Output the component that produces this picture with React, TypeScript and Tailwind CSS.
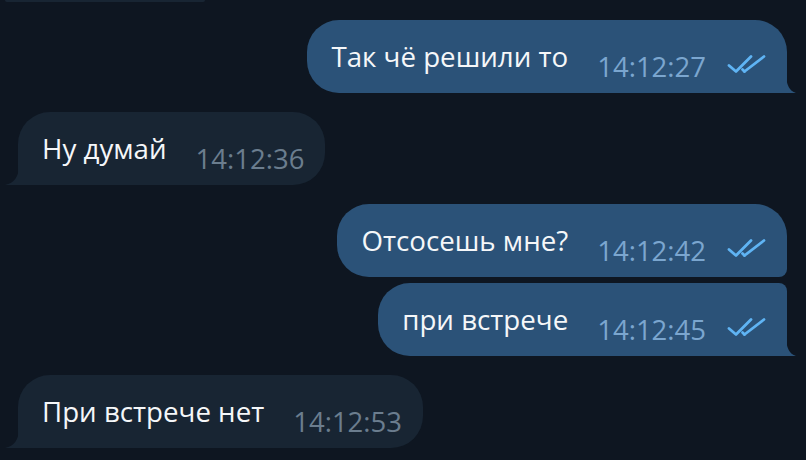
import React from "react";

type Msg = {
  text: string;
  time: string;
  out: boolean;
  tail?: boolean;
  grouped?: "top" | "bottom";
};

const messages: Msg[] = [
  { text: "Так чё решили то", time: "14:12:27", out: true, tail: true },
  { text: "Ну думай", time: "14:12:36", out: false, tail: true },
  { text: "Отсосешь мне?", time: "14:12:42", out: true, grouped: "bottom" },
  { text: "при встрече", time: "14:12:45", out: true, tail: true, grouped: "top" },
  { text: "При встрече нет", time: "14:12:53", out: false, tail: true },
];

const DoubleCheck = () => (
  <svg width="40" height="19" viewBox="0 0 40 19" fill="none" className="mb-[6px] ml-[21px]">
    <path d="M2 10.5 L9 16.5 L24 1.5" stroke="#5fb4f4" strokeWidth="2.8" strokeLinecap="round" strokeLinejoin="round" />
    <path d="M17.5 16.5 L37 1.5" stroke="#5fb4f4" strokeWidth="2.8" strokeLinecap="round" strokeLinejoin="round" />
    <path d="M15.5 14.5 L17.5 16.5" stroke="#5fb4f4" strokeWidth="2.8" strokeLinecap="round" />
  </svg>
);

const Bubble = ({ m }: { m: Msg }) => {
  const bg = m.out ? "bg-[#2b5278]" : "bg-[#182533]";
  const fill = m.out ? "#2b5278" : "#182533";
  let corners = "rounded-[32px]";
  if (m.out && m.tail && m.grouped === "top") corners = "rounded-[32px] rounded-br-none rounded-tr-[8px]";
  else if (m.out && m.tail) corners = "rounded-[32px] rounded-br-none";
  else if (m.out && m.grouped === "bottom") corners = "rounded-[32px] rounded-br-[8px]";
  else if (!m.out && m.tail) corners = "rounded-[32px] rounded-bl-none";

  return (
    <div className={`relative flex h-[73px] items-end pb-[13px] pl-6 ${m.out ? "pr-5" : "pr-[21px]"} ${bg} ${corners}`}>
      <span className="mb-[9px] text-[27.7px] leading-none text-[#f5f7f9]">{m.text}</span>
      <span className={`ml-[29px] text-[27.5px] leading-none ${m.out ? "text-[#7ba6cf]" : "text-[#6b7d8e]"}`}>{m.time}</span>
      {m.out && <DoubleCheck />}
      {m.tail && m.out && (
        <svg width="10" height="20" viewBox="0 0 10 20" className="absolute bottom-0 right-[-9px]">
          <path d="M0 0 Q0 17 10 20 L0 20 Z" fill={fill} />
        </svg>
      )}
      {m.tail && !m.out && (
        <svg width="14" height="20" viewBox="0 0 14 20" className="absolute bottom-0 left-[-13px]">
          <path d="M14 0 Q14 17 0 20 L14 20 Z" fill={fill} />
        </svg>
      )}
    </div>
  );
};

export default function App() {
  return (
    <div className="h-[460px] w-full overflow-hidden bg-[#0e1621] font-['Open_Sans',sans-serif]">
      <div className="ml-[5px] h-[2px] w-[200px] rounded-b bg-[#182533]" />
      <div className="flex flex-col pt-[18px]">
        {messages.map((m, i) => {
          const next = messages[i + 1];
          const gap = next ? (next.grouped === "top" ? "mb-[6px]" : "mb-[19px]") : "";
          return (
            <div key={i} className={`flex ${m.out ? "justify-end pr-[19px]" : "justify-start pl-[18px]"} ${gap}`}>
              <Bubble m={m} />
            </div>
          );
        })}
      </div>
    </div>
  );
}
